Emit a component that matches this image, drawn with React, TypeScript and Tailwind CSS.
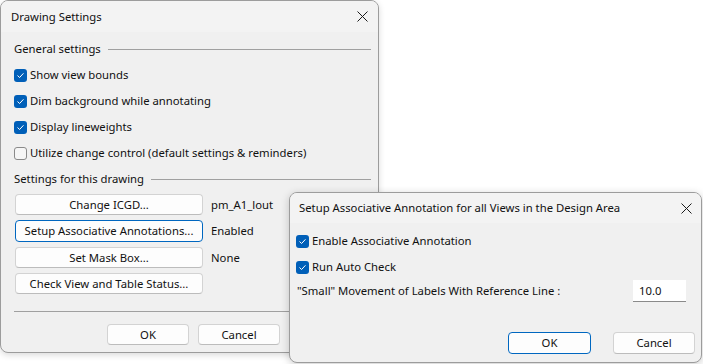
import React from 'react';

const font = { fontFamily: '"Segoe UI", "Noto Sans", sans-serif' };

const CheckBox = ({ checked, label }: { checked: boolean; label: string }) => (
  <div className="flex h-[16px] items-center gap-[3px]">
    {checked ? (
      <span className="flex h-[13px] w-[13px] items-center justify-center rounded-[3px] bg-[#005fb8]">
        <svg width="9" height="9" viewBox="0 0 9 9" fill="none">
          <path d="M1.8 4.8 L3.6 6.5 L7.2 2.6" stroke="#ffffff" strokeWidth="1" strokeLinecap="round" strokeLinejoin="round" />
        </svg>
      </span>
    ) : (
      <span className="h-[13px] w-[13px] rounded-[3px] border border-[#8a8a8a] bg-[#f6f6f6]" />
    )}
    <span className="text-[#111111]">{label}</span>
  </div>
);

const Btn = ({ label, focused, className = '' }: { label: string; focused?: boolean; className?: string }) => (
  <button
    className={
      'flex h-[21px] items-center justify-center rounded-[4px] border bg-[#fdfdfd] text-[#111111] ' +
      (focused ? 'border-[#0067c0] ' : 'border-[#d3d3d3] border-b-[#bcbcbc] ') +
      className
    }
  >
    {label}
  </button>
);

const GroupHeading = ({ label }: { label: string }) => (
  <div className="flex h-[16px] items-center gap-[7px] pr-[7px]">
    <span className="text-[#111111]">{label}</span>
    <span className="h-px flex-1 bg-[#a0a0a0]" />
  </div>
);

const CloseIcon = () => (
  <svg width="11" height="11" viewBox="0 0 11 11" fill="none">
    <path d="M0.5 0.5 L10.5 10.5 M10.5 0.5 L0.5 10.5" stroke="#1a1a1a" strokeWidth="1" />
  </svg>
);

export default function App() {
  return (
    <div className="relative h-[364px] w-[703px] overflow-hidden bg-white text-[11.3px] leading-[16px]" style={font}>
      {/* main dialog */}
      <div className="flex h-[353px] w-[379px] flex-col overflow-hidden rounded-[8px] border border-[#9c9c9c] bg-[#f0f0f0] shadow-[0_2px_6px_rgba(0,0,0,0.15)]">
        <div className="flex h-[31px] items-center justify-between bg-[#f3f3f3] pl-[10px] pr-[10px]">
          <span className="text-[#111111]">Drawing Settings</span>
          <CloseIcon />
        </div>
        <div className="flex flex-col pl-[13px] pt-[9px]">
          <GroupHeading label="General settings" />
          <div className="mt-[10px] flex flex-col gap-[10px]">
            <CheckBox checked label="Show view bounds" />
            <CheckBox checked label="Dim background while annotating" />
            <CheckBox checked label="Display lineweights" />
            <CheckBox checked={false} label="Utilize change control (default settings & reminders)" />
          </div>
          <div className="mt-[10px]">
            <GroupHeading label="Settings for this drawing" />
          </div>
          <div className="mt-[7px] grid grid-cols-[188px_1fr] items-center gap-x-[8px] gap-y-[5px] pl-[1px]">
            <Btn label="Change ICGD..." />
            <span className="text-[#111111]">pm_A1_lout</span>
            <Btn label="Setup Associative Annotations..." focused className="h-[22px]" />
            <span className="text-[#111111]">Enabled</span>
            <Btn label="Set Mask Box..." />
            <span className="text-[#111111]">None</span>
            <Btn label="Check View and Table Status..." />
            <span />
          </div>
          <div className="mr-[7px] mt-[17px] h-px bg-[#a0a0a0]" />
          <div className="mt-[12px] flex gap-[9px] pl-[93px]">
            <Btn label="OK" className="w-[82px]" />
            <Btn label="Cancel" className="w-[82px]" />
            <Btn label="Help" className="w-[82px]" />
          </div>
        </div>
      </div>

      {/* overlay dialog */}
      <div className="absolute left-[289px] top-[192px] flex h-[171px] w-[413px] flex-col overflow-hidden rounded-[8px] border border-[#9c9c9c] bg-[#f0f0f0] shadow-[0_2px_8px_rgba(0,0,0,0.2)]">
        <div className="flex h-[30px] items-center justify-between bg-[#f3f3f3] pl-[9px] pr-[9px]">
          <span className="text-[#111111]">Setup Associative Annotation for all Views in the Design Area</span>
          <CloseIcon />
        </div>
        <div className="flex flex-col pl-[6px] pt-[10px]">
          <div className="flex flex-col gap-[10px]">
            <CheckBox checked label="Enable Associative Annotation" />
            <CheckBox checked label="Run Auto Check" />
          </div>
          <div className="mt-[5px] flex items-center justify-between pr-[15px]">
            <span className="pl-[1px] text-[#111111]">"Small" Movement of Labels With Reference Line :</span>
            <div className="flex h-[22px] w-[53px] items-center border-b border-[#8a8a8a] bg-white pl-[6px] text-[#111111]">10.0</div>
          </div>
          <div className="mt-[30px] flex justify-end gap-[22px] pr-[6px]">
            <Btn label="OK" focused className="h-[22px] w-[83px]" />
            <Btn label="Cancel" className="h-[22px] w-[82px]" />
          </div>
        </div>
      </div>
    </div>
  );
}
